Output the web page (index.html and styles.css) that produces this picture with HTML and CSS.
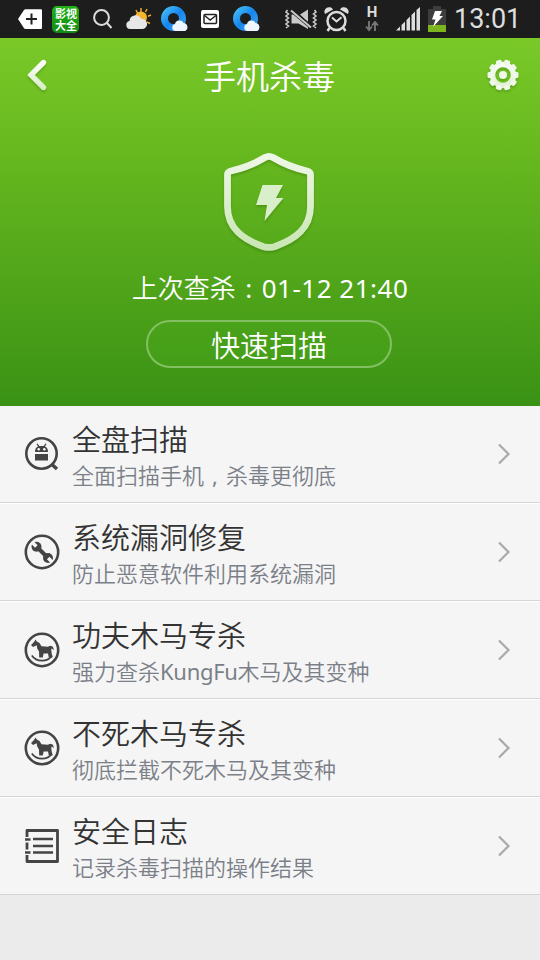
FILE: index.html
```html
<!DOCTYPE html>
<html lang="zh-CN">
<head>
<meta charset="utf-8">
<title>手机杀毒</title>
<link rel="stylesheet" href="styles.css">
</head>
<body>
<svg class="defs" width="0" height="0" aria-hidden="true">
  <defs>
    <linearGradient id="pale" gradientUnits="userSpaceOnUse" x1="0" y1="3" x2="0" y2="34"><stop offset="0" stop-color="#fff"/><stop offset="1" stop-color="#d3ecc0"/></linearGradient>
    <linearGradient id="gearFill" gradientUnits="userSpaceOnUse" x1="0" y1="-16" x2="0" y2="16"><stop offset="0" stop-color="#fff"/><stop offset="1" stop-color="#d9efca"/></linearGradient>
    <linearGradient id="shieldFill" gradientUnits="userSpaceOnUse" x1="0" y1="12" x2="0" y2="110"><stop offset="0" stop-color="#f0f8e9"/><stop offset="1" stop-color="#c8e6b3"/></linearGradient>
    <linearGradient id="blue" x1="0" y1="0" x2="1" y2="1"><stop offset="0" stop-color="#43b8f5"/><stop offset=".5" stop-color="#1585ee"/><stop offset="1" stop-color="#3b9df0"/></linearGradient>
    <symbol id="browser" viewBox="0 0 28 28">
      <circle cx="12.500" cy="13.500" r="9" fill="none" stroke="url(#blue)" stroke-width="7"/>
      <path d="M14 26a3.600 3.600 0 0 1 0-7 4.600 4.600 0 0 1 8.500-1 4.200 4.200 0 0 1 1.500 8z" fill="#eef7ff"/>
    </symbol>
    <symbol id="horse" viewBox="0 0 36 36">
      <circle cx="18" cy="18" r="16.200" fill="none" stroke="#444" stroke-width="2.600"/>
      <path d="M7 13l3-3 1.500-2.500 1.300 2 2.700 1.500 2 3.300 6.500.4 2-.9 2.700.8 1.400 3.400-2.800-1.600.1 3.200 1 6h-3.600l-.8-4.200h-4.400l-.8 4.200h-3.600l-.2-6-1.800-3.100-.5-3.300-3.700 1.900z" fill="#444"/>
      <path d="M7.800 23.500q3.500 5.200 10.200 5.200t10.200-5.200" fill="none" stroke="#444" stroke-width="1.700"/>
    </symbol>
  </defs>
</svg>

<div class="statusbar">
  <svg class="s-tag" width="25" height="20" viewBox="0 0 25 20"><path d="M0 10L6 1q.5-.8 1.500-.8H23q1 0 1 1V19q0 1-1 1H7.500q-1 0-1.500-.8z" fill="#fff"/><path d="M8 10h11M13.500 4.500v11" stroke="#222" stroke-width="2"/></svg>
  <div class="app-badge">影视大全</div>
  <svg class="s-search" width="20" height="20" viewBox="0 0 20 20"><circle cx="8.500" cy="8.500" r="7.400" fill="none" stroke="#ddd" stroke-width="2"/><path d="M13.500 13.500l5 5.500" stroke="#ddd" stroke-width="2"/></svg>
  <svg class="s-weather" width="26" height="22" viewBox="0 0 26 22"><path d="M15 0v4M21 1l-1.500 3M10 2l1.500 3M25 7l-3 1.200M21 14l3 1.500" stroke="#eda72d" stroke-width="1.500"/><circle cx="15" cy="9.500" r="6" fill="#f5b62f"/><path d="M4 21a4 4 0 0 1-.5-7.900A6 6 0 0 1 15 11a5 5 0 0 1 2 10z" fill="#e7e7e7"/></svg>
  <svg class="s-browser" width="28" height="28"><use href="#browser"/></svg>
  <svg class="s-mail" width="18" height="18" viewBox="0 0 18 18"><rect width="18" height="18" rx="2" fill="#fff"/><rect x="3" y="4.500" width="12.500" height="9" rx="1" fill="none" stroke="#222" stroke-width="1.500"/><path d="M3.500 5.500L9.200 10l5.800-4.500" fill="none" stroke="#222" stroke-width="1.500"/></svg>
  <svg class="s-browser second" width="28" height="28"><use href="#browser"/></svg>
  <svg class="s-mute" width="32" height="21" viewBox="0 0 32 21"><path d="M2.500 1l-1.500 2 2.500 2-2.500 2 2.500 2-2.500 2 2.500 2-2.500 2 2.500 2-2.500 2M29.500 1l1.500 2-2.500 2 2.500 2-2.500 2 2.500 2-2.500 2 2.500 2-2.500 2 2.500 2" fill="none" stroke="#c9c9c9" stroke-width="1.600"/><path d="M6.500 5.500h3l13.500 10.500v4L13.500 14.500h-7zM15 5.500l8-5v13z" fill="#c9c9c9"/><path d="M6 1l20 17" stroke="#1d1d1d" stroke-width="4"/><path d="M6 1.500l20 17" stroke="#c9c9c9" stroke-width="2"/></svg>
  <svg class="s-alarm" width="25" height="26" viewBox="0 0 25 26"><circle cx="12.500" cy="15" r="9" fill="none" stroke="#ddd" stroke-width="2.500"/><path d="M8 11.500l4.500 4 5-4.200" fill="none" stroke="#ddd" stroke-width="2"/><path d="M5.500 22l-2 3M19.500 22l2 3" stroke="#ddd" stroke-width="2.500"/><path d="M1 8a4.500 4.500 0 0 1 8-4.500zM24 8a4.500 4.500 0 0 0-8-4.500z" fill="#ddd"/></svg>
  <div class="network"><span>H</span><svg width="14" height="11" viewBox="0 0 14 11"><path d="M4 0v8M1 5.500L4 9l3-3.500M10 10V2M7 4.500L10 1l3 3.500" fill="none" stroke="#777" stroke-width="1.900"/></svg></div>
  <svg class="s-signal" width="24" height="24" viewBox="0 0 24 24"><path d="M0 23.500l4-4v4zM5.500 18l3.500-3.500v9H5.500zM10.500 13L14 9.500v14h-3.500zM15.500 8L19 4.500v19h-3.500zM20.500 3L24 0v23.500h-3.500z" fill="#ddd"/></svg>
  <svg class="s-battery" width="18" height="26" viewBox="0 0 18 26"><path d="M0 3h5V0h8v3h5v23H0z" fill="#3d3d3d"/><path d="M0 19h18v7H0z" fill="#7cb51d"/><path d="M7 5h7l-2.500 5H15L5 21l2.500-7.500H4z" fill="#fff"/></svg>
  <time class="clock">13:01</time>
</div>

<header class="hero">
  <div class="titlebar">
    <svg width="24" height="36" viewBox="0 0 24 36"><path d="M18.500 5.500L6 18l12.500 12.500" fill="none" stroke="url(#pale)" stroke-width="5.400" stroke-linecap="round" stroke-linejoin="miter"/></svg>
    <h1>手机杀毒</h1>
    <svg class="gear" width="34" height="34" viewBox="-17 -17 34 34">
      <circle r="10.500" fill="none" stroke="url(#gearFill)" stroke-width="5.500"/>
      <g fill="#f0f8e9"><circle r="4"/>
        <rect x="-3" y="-15.500" width="6" height="5" rx="1.500" transform="rotate(18)"/><rect x="-3" y="-15.500" width="6" height="5" rx="1.500" transform="rotate(54)"/><rect x="-3" y="-15.500" width="6" height="5" rx="1.500" transform="rotate(90)"/><rect x="-3" y="-15.500" width="6" height="5" rx="1.500" transform="rotate(126)"/><rect x="-3" y="-15.500" width="6" height="5" rx="1.500" transform="rotate(162)"/><rect x="-3" y="-15.500" width="6" height="5" rx="1.500" transform="rotate(198)"/><rect x="-3" y="-15.500" width="6" height="5" rx="1.500" transform="rotate(234)"/><rect x="-3" y="-15.500" width="6" height="5" rx="1.500" transform="rotate(270)"/><rect x="-3" y="-15.500" width="6" height="5" rx="1.500" transform="rotate(306)"/><rect x="-3" y="-15.500" width="6" height="5" rx="1.500" transform="rotate(342)"/>
      </g>
    </svg>
  </div>
  <svg class="shield" width="160" height="120" viewBox="0 0 160 120">
    <path d="M75 17.500q4-2.300 8 0 15 9 33 13.200 4.500 1 4.500 3.500v32c0 22-15 33-36 40.500q-5.500 1.500-11 0c-21-7.500-36-18.500-36-40.500v-32q0-2.500 4.500-3.500 18-4.200 33-13.200z" fill="none" stroke="url(#shieldFill)" stroke-width="6.800"/>
    <path d="M72.500 45H93l-7 13h7.500L74.500 81l2.500-16H66z" fill="#d9efca"/>
  </svg>
  <p class="last-scan">上次查杀<span class="colon">:</span><span class="stamp">01-12 21:40</span></p>
  <button class="scan" type="button">快速扫描</button>
</header>

<main class="list">
  <a class="row">
    <svg class="icon" width="36" height="36" viewBox="0 0 36 36"><circle cx="17.500" cy="17.500" r="15.200" fill="none" stroke="#444" stroke-width="2.600"/><path d="M28 28.500l5 4.500" stroke="#444" stroke-width="3.500"/><path d="M11 18h13v6.500H11zM11 16q0-4.500 3-5.500l-1.500-2.500 1-.5 1.800 2.500h4.400l1.800-2.500 1 .5-1.500 2.500q3 1 3 5.500z" fill="#444"/><circle cx="14.700" cy="13.200" r="1.200" fill="#fff"/><circle cx="20.300" cy="13.200" r="1.200" fill="#fff"/></svg>
    <div class="copy"><h2>全盘扫描</h2><p>全面扫描手机<span class="comma">,</span>杀毒更彻底</p></div>
    <svg class="chev" width="14" height="24" viewBox="0 0 14 24"><path d="M2 2.500l9.500 9.500L2 21.500"/></svg>
  </a>
  <a class="row">
    <svg class="icon" width="36" height="36" viewBox="0 0 36 36"><path d="M13 13l10.500 10.500" stroke="#444" stroke-width="4"/><circle cx="12.500" cy="12.700" r="5" fill="#444"/><circle cx="24" cy="24" r="5" fill="#444"/><path d="M7 7l5.300 5.500M29.500 29.500l-5.300-5.500" stroke="#f5f5f5" stroke-width="3.600"/><circle cx="18" cy="18" r="16.200" fill="none" stroke="#444" stroke-width="2.600"/></svg>
    <div class="copy"><h2>系统漏洞修复</h2><p>防止恶意软件利用系统漏洞</p></div>
    <svg class="chev" width="14" height="24" viewBox="0 0 14 24"><path d="M2 2.500l9.500 9.500L2 21.500"/></svg>
  </a>
  <a class="row">
    <svg class="icon" width="36" height="36"><use href="#horse"/></svg>
    <div class="copy"><h2>功夫木马专杀</h2><p>强力查杀<span class="latin">KungFu</span>木马及其变种</p></div>
    <svg class="chev" width="14" height="24" viewBox="0 0 14 24"><path d="M2 2.500l9.500 9.500L2 21.500"/></svg>
  </a>
  <a class="row">
    <svg class="icon" width="36" height="36"><use href="#horse"/></svg>
    <div class="copy"><h2>不死木马专杀</h2><p>彻底拦截不死木马及其变种</p></div>
    <svg class="chev" width="14" height="24" viewBox="0 0 14 24"><path d="M2 2.500l9.500 9.500L2 21.500"/></svg>
  </a>
  <a class="row">
    <svg class="icon" width="36" height="36" viewBox="0 0 36 36"><path d="M3 9V2.500h30.500v31H3V27M3 14.500v7" fill="none" stroke="#444" stroke-width="2.800" stroke-linejoin="round"/><path d="M1 11.500h5.500M1 24.500h5.500M9 11h20M9 18h20M9 24.500h20" stroke="#444" stroke-width="2.600"/></svg>
    <div class="copy"><h2>安全日志</h2><p>记录杀毒扫描的操作结果</p></div>
    <svg class="chev" width="14" height="24" viewBox="0 0 14 24"><path d="M2 2.500l9.500 9.500L2 21.500"/></svg>
  </a>
</main>
</body>
</html>
```
FILE: styles.css
```css
* { box-sizing: border-box; }
body {
  margin: 0;
  width: 540px;
  height: 960px;
  overflow: hidden;
  background: #ebebeb;
  font-family: "Noto Sans", "Noto Sans CJK SC", sans-serif;
  font-weight: 350;
}
h1, h2, p { margin: 0; font-weight: 350; }
svg { display: block; flex: none; }
.defs { position: absolute; }

.statusbar {
  height: 38px;
  padding-left: 18px;
  display: flex;
  align-items: center;
  background: #1d1d1d;
}
.app-badge {
  width: 27px;
  height: 27px;
  margin-left: 9px;
  padding: 1px 2px 0 3px;
  border-radius: 5px;
  background: linear-gradient(#21b315, #128b12);
  color: #fff;
  font: 700 11px/12px "Noto Sans CJK SC", sans-serif;
  word-break: break-all;
}
.s-search { margin-left: 14px; }
.s-weather { margin-left: 13px; }
.s-browser { margin-left: 9px; }
.s-mail { margin-left: 12px; }
.s-browser.second { margin-left: 14px; }
.s-mute { margin-left: 24px; }
.s-alarm { margin-left: 7px; }
.network {
  width: 14px;
  margin-left: 16px;
  display: flex;
  flex-direction: column;
  align-items: center;
  gap: 3px;
  color: #ddd;
  font: 700 15px/12px Roboto, sans-serif;
}
.s-signal { margin-left: 17px; }
.s-battery { margin-left: 8px; }
.clock {
  margin-left: 8px;
  color: #dedede;
  font: 400 27px/38px Roboto, sans-serif;
}

.hero {
  height: 368px;
  display: flex;
  flex-direction: column;
  align-items: center;
  background: linear-gradient(#7ac929, #68b91f 30%, #3a9215);
  color: #fff;
}
.titlebar {
  width: 100%;
  height: 74px;
  padding: 0 20px 0 25px;
  display: flex;
  align-items: center;
  justify-content: space-between;
}
.titlebar svg, .shield { filter: drop-shadow(0 2px 1px rgba(40, 90, 0, .3)); }
.titlebar h1 {
  font-size: 33px;
  line-height: 74px;
  padding-top: 3px;
  margin-left: 3px;
}
.shield { margin: 28px 0 0; }
.last-scan {
  height: 40px;
  margin-top: 8px;
  font-size: 26px;
  line-height: 40px;
  white-space: nowrap;
}
.colon { display: inline-block; width: 26px; text-align: center; font-weight: 400; }
.stamp { letter-spacing: .5px; font-weight: 400; }
.latin { font-weight: 400; letter-spacing: -.3px; }
.scan {
  width: 246px;
  height: 48px;
  margin: 12px 2px 0 0;
  padding: 3px 0 0;
  border: 2px solid #83c063;
  border-radius: 24px;
  background: rgba(80, 180, 30, .2);
  color: #fff;
  font: inherit;
  font-size: 29px;
  line-height: 41px;
}

.row {
  height: 98px;
  padding: 0 29px 0 24px;
  display: flex;
  align-items: center;
  background: #f5f5f5;
  border-top: 1px solid #fff;
  border-bottom: 1px solid #d5d5d5;
}
.row:first-child { height: 97px; border-top: 0; }
.copy { flex: 1; margin-left: 12px; padding-top: 2px; }
.copy h2 {
  color: #333;
  font-size: 29px;
  line-height: 40px;
}
.copy p {
  color: #7b8088;
  font-size: 22px;
  line-height: 31px;
}
.comma { display: inline-block; width: 22px; text-align: center; font-weight: 400; }
.chev path { fill: none; stroke: #a9a9a9; stroke-width: 2.2; }
```
